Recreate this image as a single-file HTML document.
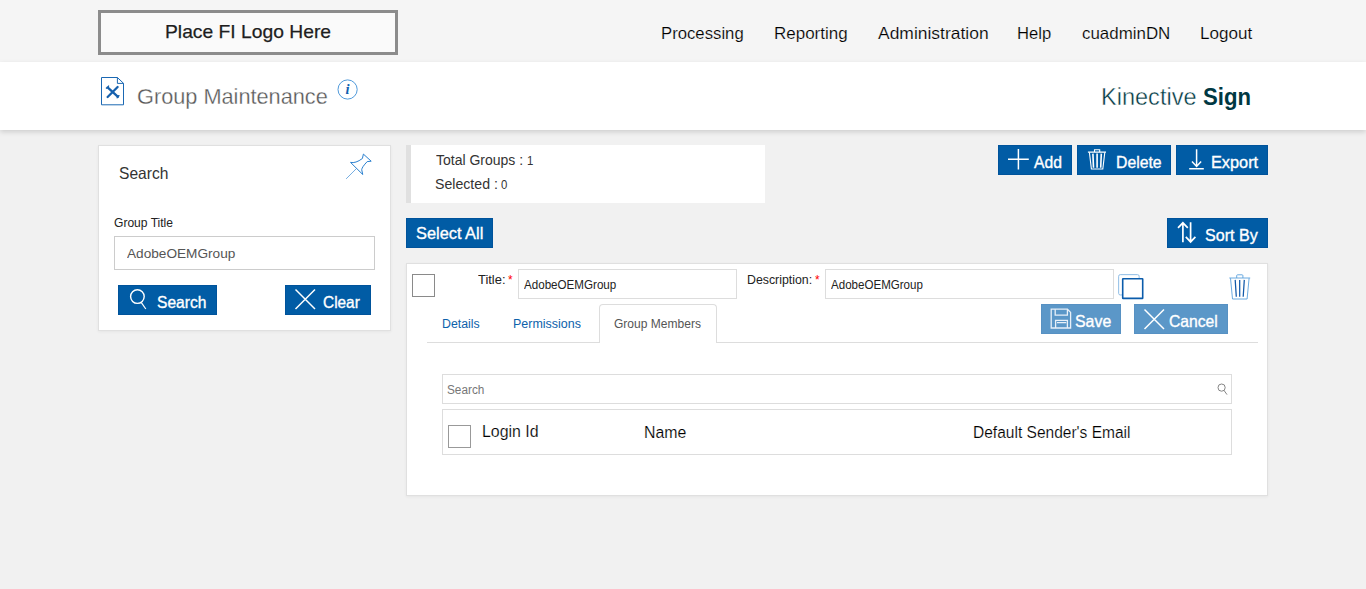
<!DOCTYPE html>
<html lang="en">
<head>
<meta charset="utf-8">
<title>Group Maintenance</title>
<style>
*{box-sizing:border-box;margin:0;padding:0}
html,body{width:1366px;height:589px;overflow:hidden}
body{position:relative;background:#f1f1f1;font-family:"Liberation Sans",sans-serif;color:#222}
.abs{position:absolute}
.t{position:absolute;white-space:nowrap;line-height:1;transform-origin:0 0;display:block}
header.top{position:absolute;left:0;top:0;width:1366px;height:62px;background:#f5f5f5}
.logo{position:absolute;left:98px;top:10px;width:300px;height:45px;border:3px solid #8c8c8c;background:#fafafa}
.titlebar{position:absolute;left:0;top:62px;width:1366px;height:68px;background:#fff;box-shadow:0 2px 5px rgba(0,0,0,.15)}
.panel{position:absolute;background:#fff;border:1px solid #e0e0e0;box-shadow:0 1px 3px rgba(0,0,0,.05)}
.btn{position:absolute;height:30px;background:#015ca5;border:0;box-shadow:inset 0 0 0 1px #00539b;color:#fff;font-family:inherit;display:block}
.btn.dis{background:#5b97c8;box-shadow:inset 0 0 0 1px #5791c3}
.btn svg{position:absolute;overflow:visible}
.inp{position:absolute;background:#fff;border:1px solid #ddd}
.cb{position:absolute;width:23px;height:23px;border:1px solid #8a8a8a;background:#fff}
svg{position:absolute;overflow:visible}
</style>
</head>
<body>

<header class="top">
  <div class="logo"><span class="t" id="t-logo" style="left:64.29px;top:9.12px;font-size:19px;font-weight:400;color:#1e1e1e;transform:scaleX(1.0146);-webkit-text-stroke:.25px #1e1e1e;">Place FI Logo Here</span></div>
  <nav>
    <span class="t" id="t-n1" style="left:661.19px;top:24.93px;font-size:16.5px;font-weight:400;color:#000;transform:scaleX(1.0131);-webkit-text-stroke:.18px #f5f5f5;">Processing</span><span class="t" id="t-n2" style="left:773.97px;top:24.93px;font-size:16.5px;font-weight:400;color:#000;transform:scaleX(1.0289);-webkit-text-stroke:.18px #f5f5f5;">Reporting</span><span class="t" id="t-n3" style="left:878.30px;top:24.93px;font-size:16.5px;font-weight:400;color:#000;transform:scaleX(1.0578);-webkit-text-stroke:.18px #f5f5f5;">Administration</span><span class="t" id="t-n4" style="left:1017.39px;top:24.93px;font-size:16.5px;font-weight:400;color:#000;transform:scaleX(1.0074);-webkit-text-stroke:.18px #f5f5f5;">Help</span><span class="t" id="t-n5" style="left:1082.30px;top:24.93px;font-size:16.5px;font-weight:400;color:#000;transform:scaleX(1.0248);-webkit-text-stroke:.18px #f5f5f5;">cuadminDN</span><span class="t" id="t-n6" style="left:1199.97px;top:24.93px;font-size:16.5px;font-weight:400;color:#000;transform:scaleX(1.0344);-webkit-text-stroke:.18px #f5f5f5;">Logout</span>
  </nav>
</header>

<div class="titlebar">
  <svg style="left:101px;top:15px" width="24" height="30" viewBox="0 0 24 30" fill="none" stroke="#1b68b3" stroke-width="1.1">
    <path d="M0.5 0.5 H16.4 L22.5 6.3 V27.8 H0.5 Z M16.4 0.5 V6.4 H22.5" stroke-linejoin="round" stroke-width="1"/>
    <path d="M6.6 10.4 L17 19.8 M16.6 10 L6.6 20" stroke="#1560ad" stroke-width="2.3" stroke-linecap="round"/>
    <path d="M5.4 11.2 l1.2 -0.6 M7.6 9 l-0.6 1.2 M18 18.6 l-1.2 0.6 M16.2 20.8 l0.6 -1.2" stroke="#1560ad" stroke-width="1.3" stroke-linecap="round"/>
  </svg>
  <span class="t" id="t-ttl" style="left:137.05px;top:22.50px;font-size:22.8px;font-weight:400;color:#585858;transform:scaleX(0.9529);-webkit-text-stroke:.3px #fff;">Group Maintenance</span>
  <svg style="left:337px;top:16.5px" width="21" height="21" viewBox="0 0 21 21">
    <circle cx="10.6" cy="10.5" r="9.6" fill="none" stroke="#3d8fd6" stroke-width="0.9"/>
    <text x="10.6" y="15.3" text-anchor="middle" font-family="Liberation Serif, serif" font-style="italic" font-weight="700" font-size="14.5" fill="#0f5fb0">i</text>
  </svg>
  <span class="t" id="t-k1" style="left:1100.84px;top:24.11px;font-size:23.5px;font-weight:400;color:#003842;transform:scaleX(1.0019);-webkit-text-stroke:.4px #fff;">Kinective</span><span class="t" id="t-k2" style="left:1203.48px;top:24.11px;font-size:23.5px;font-weight:700;color:#003842;transform:scaleX(0.9427);">Sign</span>
</div>

<!-- left search panel -->
<aside class="panel" style="left:98px;top:145px;width:293px;height:186px">
  <span class="t" id="t-sh" style="left:20.40px;top:19.03px;font-size:16.5px;font-weight:400;color:#333;transform:scaleX(0.9443);">Search</span>
  <svg style="left:241px;top:2px" width="40" height="40" viewBox="0 0 40 40" fill="none" stroke="#2a80cf" stroke-width="1">
    <path d="M10.5 14.4 Q15.6 15.6 22.4 10.5 L23.4 6.1 L31.2 13.2 L27.2 13.6 Q22 19 21.7 21.7 L22.75 26.5 Z" stroke-linejoin="round"/>
    <path d="M16.3 20.7 L6.1 30.9" stroke-width="0.65"/>
  </svg>
  <span class="t" id="t-gt" style="left:15.30px;top:70.50px;font-size:12.4px;font-weight:400;color:#222;transform:scaleX(0.9735);">Group Title</span>
  <div class="inp" style="left:15px;top:90px;width:261px;height:34px;border-color:#ccc"><span class="t" id="t-si" style="left:12.20px;top:10.49px;font-size:13.6px;font-weight:400;color:#555;transform:scaleX(1.0029);">AdobeOEMGroup</span></div>
  <button class="btn" style="left:19px;top:139px;width:99px">
    <svg style="left:10px;top:3px" width="20" height="24" viewBox="0 0 20 24" fill="none" stroke="#fff" stroke-width="1.4">
      <circle cx="9.4" cy="8.6" r="6.8"/><path d="M13.2 14.4 L17.8 21" stroke-width="1.2"/>
    </svg>
    <span class="t" id="t-bs" style="left:39.40px;top:8.83px;font-size:16.5px;font-weight:400;color:#fff;transform:scaleX(0.9443);-webkit-text-stroke:.35px #fff;">Search</span>
  </button>
  <button class="btn" style="left:186px;top:139px;width:86px">
    <svg style="left:9.5px;top:4px" width="21" height="21" viewBox="0 0 21 21" fill="none" stroke="#fff" stroke-width="1.5"><path d="M0.5 0.5 L20 20 M20 0.5 L0.5 20"/></svg>
    <span class="t" id="t-bc" style="left:38.20px;top:8.73px;font-size:16.5px;font-weight:400;color:#fff;transform:scaleX(0.9340);-webkit-text-stroke:.35px #fff;">Clear</span>
  </button>
</aside>

<!-- summary -->
<div class="abs" style="left:406px;top:145px;width:359px;height:58px;background:#fff;border-left:5px solid #e0e0e0">
  <span class="t" id="t-tg" style="left:25.00px;top:9.12px;font-size:13.8px;font-weight:400;color:#333;transform:scaleX(1.0147);">Total Groups :</span><span class="t" id="t-tg1" style="left:115.78px;top:9.64px;font-size:12px;font-weight:400;color:#333;transform:scaleX(0.9500);">1</span><span class="t" id="t-sl" style="left:24.20px;top:32.52px;font-size:13.8px;font-weight:400;color:#333;transform:scaleX(1.0244);">Selected :</span><span class="t" id="t-sl0" style="left:90.27px;top:34.34px;font-size:12px;font-weight:400;color:#333;transform:scaleX(0.9500);">0</span>
</div>

<button class="btn" style="left:998px;top:145px;width:74px">
  <svg style="left:10px;top:4px" width="21" height="21" viewBox="0 0 21 21" stroke="#fff" stroke-width="1.5"><path d="M0 10.2 H20.8 M10.4 0 V20.6"/></svg>
  <span class="t" id="t-ba" style="left:35.90px;top:9.03px;font-size:16.5px;font-weight:400;color:#fff;transform:scaleX(0.9526);-webkit-text-stroke:.35px #fff;">Add</span>
</button>
<button class="btn" style="left:1077px;top:145px;width:94px">
  <svg style="left:10px;top:0px" width="20" height="24" viewBox="0 0 20 24" fill="none" stroke="#fff">
    <path d="M0.9 7.1 H19 M7.5 7 V4.7 H12.7 V7" stroke-width="1.1"/>
    <path d="M2.4 7.4 L4.4 24 H15.8 L17.8 7.4" stroke-width="1.1"/>
    <path d="M5.9 8.6 L6.5 22.7 M10.1 8.6 V22.7 M14.3 8.6 L13.7 22.7" stroke-width="1.6"/>
  </svg>
  <span class="t" id="t-bd" style="left:38.54px;top:9.03px;font-size:16.5px;font-weight:400;color:#fff;transform:scaleX(0.9566);-webkit-text-stroke:.35px #fff;">Delete</span>
</button>
<button class="btn" style="left:1176px;top:145px;width:92px">
  <svg style="left:13px;top:4px" width="16" height="22" viewBox="0 0 16 22" fill="none" stroke="#fff" stroke-width="1.5">
    <path d="M7.6 0.2 V17.3 M3 12.6 L7.6 17.5 L12.1 12.6 M0.2 19.7 H14.8"/>
  </svg>
  <span class="t" id="t-be" style="left:34.91px;top:9.03px;font-size:16.5px;font-weight:400;color:#fff;transform:scaleX(0.9880);-webkit-text-stroke:.35px #fff;">Export</span>
</button>

<button class="btn" style="left:406px;top:218px;width:87px"><span class="t" id="t-sa" style="left:9.56px;top:6.69px;font-size:16.2px;font-weight:400;color:#fff;transform:scaleX(1.0108);-webkit-text-stroke:.35px #fff;">Select All</span></button>
<button class="btn" style="left:1167px;top:218px;width:101px">
  <svg style="left:10px;top:3px" width="20" height="24" viewBox="0 0 20 24" fill="none" stroke="#fff" stroke-width="1.7">
    <path d="M5.9 1.2 V21.2 M1 6.9 L5.9 1.8 L10.8 6.9"/>
    <path d="M13.6 1.2 V21 M8.8 15.8 L13.6 20.9 L18.4 15.8"/>
  </svg>
  <span class="t" id="t-bsb" style="left:38.02px;top:8.83px;font-size:16.5px;font-weight:400;color:#fff;transform:scaleX(0.9739);-webkit-text-stroke:.35px #fff;">Sort By</span>
</button>

<!-- group card -->
<section class="panel" style="left:406px;top:263px;width:862px;height:233px">
  <div class="cb" style="left:5px;top:10px"></div>
  <span class="t" id="t-lt" style="left:71.40px;top:10.40px;font-size:12.4px;font-weight:400;color:#222;transform:scaleX(1.0421);">Title:</span><span class="t" id="t-lts" style="left:100.69px;top:10.40px;font-size:12.4px;font-weight:400;color:#f00;transform:scaleX(0.9500);">*</span>
  <div class="inp" style="left:111px;top:5px;width:219px;height:30px"><span class="t" id="t-it" style="left:5.10px;top:8.84px;font-size:12px;font-weight:400;color:#222;transform:scaleX(0.9675);">AdobeOEMGroup</span></div>
  <span class="t" id="t-ld" style="left:339.60px;top:10.40px;font-size:12.4px;font-weight:400;color:#222;transform:scaleX(0.9957);">Description:</span><span class="t" id="t-lds" style="left:407.58px;top:10.40px;font-size:12.4px;font-weight:400;color:#f00;transform:scaleX(0.9500);">*</span>
  <div class="inp" style="left:418px;top:5px;width:289px;height:30px"><span class="t" id="t-id" style="left:5.20px;top:8.84px;font-size:12px;font-weight:400;color:#222;transform:scaleX(0.9633);">AdobeOEMGroup</span></div>

  <svg style="left:711px;top:10px" width="27" height="27" viewBox="0 0 27 27">
    <rect x="0.65" y="0.65" width="20.5" height="20.3" rx="1.6" fill="none" stroke="#8fbde6" stroke-width="1"/>
    <rect x="4.7" y="4.7" width="20" height="19.7" rx="0.4" fill="#fff" stroke="#0b5cab" stroke-width="1.6"/>
  </svg>

  <svg style="left:822px;top:10px" width="22" height="27" viewBox="0 0 22 27" fill="none">
    <path d="M0.3 4 H21.2 M7.7 4 V1.6 Q7.7 0.8 8.5 0.8 H13.1 Q13.9 0.8 13.9 1.6 V4" stroke-width="0.9" stroke="#5aa0dc"/>
    <path d="M1.5 4.2 L3.5 25 H18.1 L20.1 4.2" stroke-width="0.9" stroke="#5aa0dc" stroke-linejoin="round"/>
    <path d="M6.2 5.9 L7.3 22.8 M10.7 5.9 V22.8 M15.3 5.9 L14.2 22.8" stroke-width="1.25" stroke="#1159a9"/>
  </svg>

  <div class="abs" style="left:20px;top:78px;width:831px;height:1px;background:#ddd"></div>
  <span class="t" id="t-t1" style="left:35.00px;top:53.59px;font-size:12.3px;font-weight:400;color:#0d62ab;transform:scaleX(1.0017);">Details</span><span class="t" id="t-t2" style="left:106.29px;top:53.59px;font-size:12.3px;font-weight:400;color:#0d62ab;transform:scaleX(1.0134);">Permissions</span>
  <div class="abs" style="left:192px;top:40px;width:118px;height:39px;border:1px solid #ddd;border-bottom:0;border-radius:4px 4px 0 0;background:#fff"></div>
  <span class="t" id="t-t3" style="left:207.38px;top:53.59px;font-size:12.3px;font-weight:400;color:#555;transform:scaleX(0.9789);">Group Members</span>

  <button class="btn dis" style="left:634px;top:40px;width:80px">
    <svg style="left:9px;top:3.5px" width="22" height="22" viewBox="0 0 22 22" fill="none" stroke="#e8f0f8" stroke-width="1.3">
      <path d="M1.2 1.2 H17.4 L20.6 4.4 V20 H1.2 Z"/>
      <path d="M5.2 1.2 V7.2 H17.4 V1.2 M5.6 20 V12.4 H17.4 V20 M7 14.6 H16.2"/>
    </svg>
    <span class="t" id="t-bsv" style="left:34.38px;top:8.83px;font-size:16.5px;font-weight:400;color:#fff;transform:scaleX(0.9633);-webkit-text-stroke:.35px #fff;">Save</span>
  </button>
  <button class="btn dis" style="left:727px;top:40px;width:94px">
    <svg style="left:9.5px;top:4.5px" width="21" height="21" viewBox="0 0 21 21" fill="none" stroke="#fff" stroke-width="1.5"><path d="M0.5 0.5 L20 20 M20 0.5 L0.5 20"/></svg>
    <span class="t" id="t-bcn" style="left:35.40px;top:8.83px;font-size:16.5px;font-weight:400;color:#fff;transform:scaleX(0.9508);-webkit-text-stroke:.35px #fff;">Cancel</span>
  </button>

  <div class="inp" style="left:35px;top:110px;width:790px;height:30px">
    <span class="t" id="t-ph" style="left:4.02px;top:9.49px;font-size:12.3px;font-weight:400;color:#777;transform:scaleX(0.9580);">Search</span>
    <svg style="left:774.4px;top:7.6px" width="12" height="14" viewBox="0 0 12 14" fill="none" stroke="#707070" stroke-width="0.85"><circle cx="4.6" cy="4.6" r="3.6"/><path d="M7 7.4 L10 11.6"/></svg>
  </div>
  <div class="inp" style="left:35px;top:145px;width:790px;height:46px">
    <div class="cb" style="left:5px;top:15px;border-color:#999"></div>
    <span class="t" id="t-h1" style="left:39.31px;top:14.36px;font-size:16px;font-weight:400;color:#000;transform:scaleX(0.9938);-webkit-text-stroke:.18px #fff;">Login Id</span><span class="t" id="t-h2" style="left:201.01px;top:15.16px;font-size:16px;font-weight:400;color:#000;transform:scaleX(0.9933);-webkit-text-stroke:.18px #fff;">Name</span><span class="t" id="t-h3" style="left:530.03px;top:15.06px;font-size:16px;font-weight:400;color:#000;transform:scaleX(0.9708);-webkit-text-stroke:.18px #fff;">Default Sender's Email</span>
  </div>
</section>

</body>
</html>
